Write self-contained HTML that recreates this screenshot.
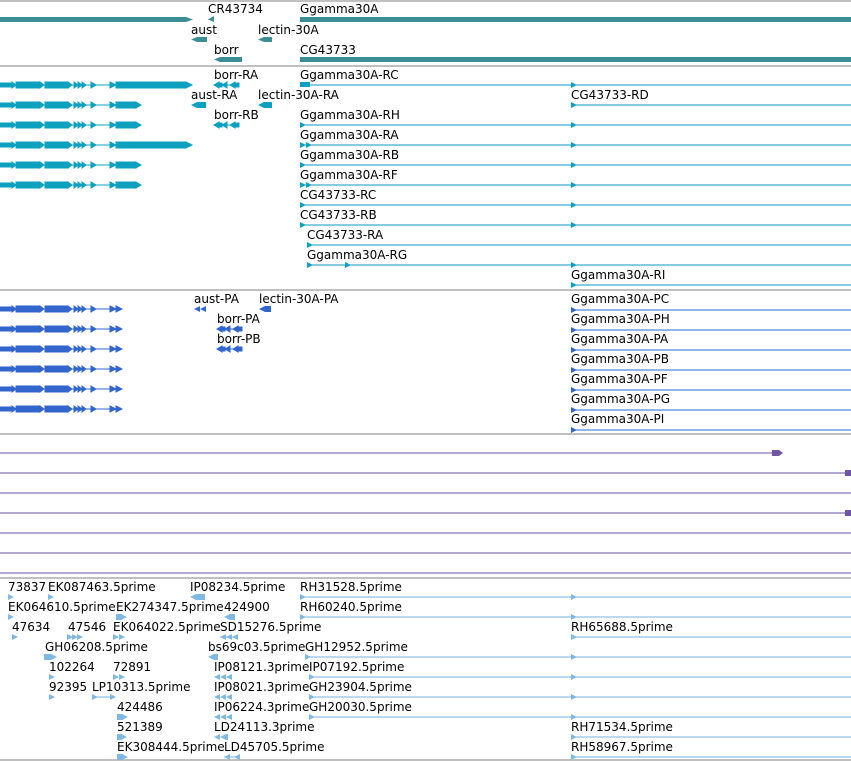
<!DOCTYPE html>
<html><head><meta charset="utf-8"><style>
html,body{margin:0;padding:0;background:#fff;}
svg{display:block;}
text{font-family:"DejaVu Sans","Liberation Sans",sans-serif;font-size:12px;fill:#000;}
line{shape-rendering:crispEdges;}
</style></head><body>
<svg width="851" height="762" viewBox="0 0 851 762" xmlns="http://www.w3.org/2000/svg">
<defs>
<g id="tA">
<line x1="0" y1="0" x2="190" y2="0" stroke-width="1"/>
<rect x="0" y="-2" width="12" height="4"/><polygon points="12,-3 16,0 12,3"/>
<rect x="16" y="-3" width="24" height="6"/><polygon points="40,-3 44,0 40,3"/>
<rect x="45" y="-3" width="23" height="6"/><polygon points="68,-3 72,0 68,3"/>
<polygon points="74,-3 78,0 74,3"/><polygon points="78,-3 82,0 78,3"/><polygon points="82,-3 86,0 82,3"/>
<polygon points="91,-3 96,0 91,3"/><polygon points="110,-3 116,0 110,3"/>
<rect x="116" y="-3" width="70" height="6"/><polygon points="186,-3 192,0 186,3"/>
</g>
<g id="tB">
<line x1="0" y1="0" x2="138" y2="0" stroke-width="1"/>
<rect x="0" y="-2" width="12" height="4"/><polygon points="12,-3 16,0 12,3"/>
<rect x="16" y="-3" width="24" height="6"/><polygon points="40,-3 44,0 40,3"/>
<rect x="45" y="-3" width="23" height="6"/><polygon points="68,-3 72,0 68,3"/>
<polygon points="74,-3 78,0 74,3"/><polygon points="78,-3 82,0 78,3"/><polygon points="82,-3 86,0 82,3"/>
<polygon points="91,-3 96,0 91,3"/><polygon points="110,-3 116,0 110,3"/>
<rect x="116" y="-3" width="20" height="6"/><polygon points="136,-3 141,0 136,3"/>
</g>
<g id="tC">
<line x1="0" y1="0" x2="120" y2="0" stroke-width="1"/>
<rect x="0" y="-2" width="12" height="4"/><polygon points="12,-3 16,0 12,3"/>
<rect x="16" y="-3" width="24" height="6"/><polygon points="40,-3 44,0 40,3"/>
<rect x="45" y="-3" width="23" height="6"/><polygon points="68,-3 72,0 68,3"/>
<polygon points="74,-3 78,0 74,3"/><polygon points="78,-3 82,0 78,3"/><polygon points="82,-3 86,0 82,3"/>
<polygon points="91,-3 96,0 91,3"/><polygon points="110,-3 116,0 110,3"/><polygon points="116,-3 122,0 116,3"/>
</g>
<g id="ra"><polygon points="0,-3 6,0 0,3"/></g>
<g id="la"><polygon points="6,-3 0,0 6,3"/></g>
<g id="rev3"><line x1="0" y1="0" x2="24" y2="0" stroke-width="1"/><polygon points="5,-3 0,0 5,3"/><rect x="5" y="-2" width="3" height="4"/><polygon points="13,-3 8,0 13,3"/><polygon points="21,-3 16,0 21,3"/><rect x="21" y="-2" width="4" height="4"/></g>
</defs>

<g stroke="#c0c0c0" stroke-width="2">
<line x1="0" y1="1" x2="851" y2="1"/><line x1="0" y1="66" x2="851" y2="66"/>
<line x1="0" y1="290" x2="851" y2="290"/><line x1="0" y1="434" x2="851" y2="434"/>
<line x1="0" y1="578" x2="851" y2="578"/><line x1="0" y1="760" x2="851" y2="760"/>
</g>

<g fill="#3d8e94">
<rect x="0" y="17" width="186" height="5"/><polygon points="186,17 193,19.5 186,22"/>
<polygon points="214,16 208,19.5 214,22"/>
<rect x="300" y="17" width="551" height="5"/>
<polygon points="197,37 191,39.5 197,42"/><rect x="197" y="37" width="10" height="5"/>
<polygon points="264,37 258,39.5 264,42"/><rect x="264" y="37" width="8" height="5"/>
<polygon points="220,57 214,59.5 220,62"/><rect x="220" y="57" width="22" height="5"/>
<rect x="300" y="57" width="551" height="5"/>
</g>
<text x="208" y="13">CR43734</text><text x="300" y="13">Ggamma30A</text>
<text x="191" y="34">aust</text><text x="258" y="34">lectin-30A</text>
<text x="214" y="54">borr</text><text x="300" y="54">CG43733</text>

<g fill="#0ea0bf" stroke="#0ea0bf">
<use href="#tA" x="0" y="85"/><use href="#tB" x="0" y="105"/><use href="#tB" x="0" y="125"/>
<use href="#tA" x="0" y="145"/><use href="#tB" x="0" y="165"/><use href="#tB" x="0" y="185"/>
<use href="#rev3" x="214" y="85"/><use href="#rev3" x="214" y="125"/>
<polygon points="197,102 191,105 197,108" stroke="none"/><rect x="197" y="102" width="9" height="6" stroke="none"/>
<polygon points="264,102 258,105 264,108" stroke="none"/><rect x="264" y="102" width="8" height="6" stroke="none"/>
</g>
<g stroke="#0e98b8" stroke-width="1">
<line x1="300" y1="85" x2="851" y2="85"/><line x1="571" y1="105" x2="851" y2="105"/>
<line x1="300" y1="125" x2="851" y2="125"/><line x1="300" y1="145" x2="851" y2="145"/>
<line x1="300" y1="165" x2="851" y2="165"/><line x1="300" y1="185" x2="851" y2="185"/>
<line x1="300" y1="205" x2="851" y2="205"/><line x1="300" y1="225" x2="851" y2="225"/>
<line x1="307" y1="245" x2="851" y2="245"/><line x1="307" y1="265" x2="851" y2="265"/>
<line x1="571" y1="285" x2="851" y2="285"/>
</g>
<g fill="#0ea0bf">
<rect x="300" y="82" width="10" height="5"/><use href="#ra" x="571" y="85"/><use href="#ra" x="571" y="105"/>
<use href="#ra" x="300" y="125"/><use href="#ra" x="571" y="125"/>
<use href="#ra" x="300" y="145"/><use href="#ra" x="306" y="145"/><use href="#ra" x="571" y="145"/>
<use href="#ra" x="300" y="165"/><use href="#ra" x="571" y="165"/>
<use href="#ra" x="300" y="185"/><use href="#ra" x="306" y="185"/><use href="#ra" x="571" y="185"/>
<use href="#ra" x="300" y="205"/><use href="#ra" x="571" y="205"/>
<use href="#ra" x="300" y="225"/><use href="#ra" x="571" y="225"/>
<use href="#ra" x="307" y="245"/>
<use href="#ra" x="307" y="265"/><use href="#ra" x="345" y="265"/><use href="#ra" x="571" y="265"/>
<use href="#ra" x="571" y="285"/>
</g>
<text x="214" y="79">borr-RA</text><text x="300" y="79">Ggamma30A-RC</text>
<text x="191" y="99">aust-RA</text><text x="258" y="99">lectin-30A-RA</text><text x="571" y="99">CG43733-RD</text>
<text x="214" y="119">borr-RB</text><text x="300" y="119">Ggamma30A-RH</text>
<text x="300" y="139">Ggamma30A-RA</text><text x="300" y="159">Ggamma30A-RB</text>
<text x="300" y="179">Ggamma30A-RF</text><text x="300" y="199">CG43733-RC</text>
<text x="300" y="219">CG43733-RB</text><text x="307" y="239">CG43733-RA</text>
<text x="307" y="259">Ggamma30A-RG</text><text x="571" y="279">Ggamma30A-RI</text>

<g fill="#3366cc" stroke="#3366cc">
<use href="#tC" x="0" y="309"/><use href="#tC" x="0" y="329"/><use href="#tC" x="0" y="349"/>
<use href="#tC" x="0" y="369"/><use href="#tC" x="0" y="389"/><use href="#tC" x="0" y="409"/>
<use href="#rev3" x="217" y="329"/><use href="#rev3" x="217" y="349"/>
<polygon points="200,306 194,309 200,312" stroke="none"/><polygon points="206,306 200,309 206,312" stroke="none"/>
<polygon points="265,306 259,309 265,312" stroke="none"/><rect x="265" y="306" width="6" height="6" stroke="none"/>
</g>
<g stroke="#3366cc" stroke-width="1">
<line x1="571" y1="310" x2="851" y2="310"/><line x1="571" y1="330" x2="851" y2="330"/>
<line x1="571" y1="350" x2="851" y2="350"/><line x1="571" y1="370" x2="851" y2="370"/>
<line x1="571" y1="390" x2="851" y2="390"/><line x1="571" y1="410" x2="851" y2="410"/>
<line x1="571" y1="430" x2="851" y2="430"/>
</g>
<g fill="#3366cc">
<use href="#ra" x="571" y="310"/><use href="#ra" x="571" y="330"/><use href="#ra" x="571" y="350"/>
<use href="#ra" x="571" y="370"/><use href="#ra" x="571" y="390"/><use href="#ra" x="571" y="410"/><use href="#ra" x="571" y="430"/>
</g>
<text x="194" y="303">aust-PA</text><text x="259" y="303">lectin-30A-PA</text><text x="571" y="303">Ggamma30A-PC</text>
<text x="217" y="323">borr-PA</text><text x="571" y="323">Ggamma30A-PH</text>
<text x="217" y="343">borr-PB</text><text x="571" y="343">Ggamma30A-PA</text>
<text x="571" y="363">Ggamma30A-PB</text><text x="571" y="383">Ggamma30A-PF</text>
<text x="571" y="403">Ggamma30A-PG</text><text x="571" y="423">Ggamma30A-PI</text>

<g stroke="#6a50a0" stroke-width="1">
<line x1="0" y1="453" x2="780" y2="453"/><line x1="0" y1="473" x2="851" y2="473"/>
<line x1="0" y1="493" x2="851" y2="493"/><line x1="0" y1="513" x2="851" y2="513"/>
<line x1="0" y1="533" x2="851" y2="533"/><line x1="0" y1="553" x2="851" y2="553"/>
<line x1="0" y1="573" x2="851" y2="573"/>
</g>
<g fill="#7055a5">
<rect x="772" y="450" width="7" height="6"/><polygon points="779,450 783,453 779,456"/>
<rect x="845" y="470" width="6" height="6"/><rect x="845" y="510" width="6" height="6"/>
</g>

<g stroke="#74b0dc" stroke-width="1">
<line x1="300" y1="597" x2="851" y2="597"/><line x1="300" y1="617" x2="851" y2="617"/>
<line x1="571" y1="637" x2="851" y2="637"/><line x1="305" y1="657" x2="851" y2="657"/>
<line x1="309" y1="677" x2="851" y2="677"/><line x1="309" y1="697" x2="851" y2="697"/>
<line x1="309" y1="717" x2="851" y2="717"/><line x1="571" y1="737" x2="851" y2="737"/>
<line x1="571" y1="757" x2="851" y2="757"/>
<line x1="92" y1="697" x2="114" y2="697"/><line x1="220" y1="637" x2="237" y2="637"/>
<line x1="224" y1="757" x2="240" y2="757"/>
</g>
<g fill="#7fb8e0">
<use href="#ra" x="8" y="597"/><use href="#ra" x="48" y="597"/>
<polygon points="196,594 190,597 196,600"/><rect x="196" y="594" width="9" height="6"/>
<use href="#ra" x="300" y="597"/><use href="#ra" x="571" y="597"/>
<use href="#ra" x="8" y="617"/><rect x="116" y="614" width="6" height="6"/><use href="#ra" x="121" y="617"/>
<polygon points="230,614 224,617 230,620"/><rect x="230" y="614" width="5" height="6"/>
<use href="#ra" x="300" y="617"/><use href="#ra" x="571" y="617"/>
<use href="#ra" x="12" y="637"/><use href="#ra" x="67" y="637"/><use href="#ra" x="72" y="637"/><use href="#ra" x="77" y="637"/>
<use href="#ra" x="113" y="637"/><use href="#ra" x="119" y="637"/>
<use href="#la" x="220" y="637"/><use href="#la" x="226" y="637"/><use href="#la" x="232" y="637"/>
<use href="#ra" x="571" y="637"/>
<rect x="44" y="654" width="7" height="6"/><use href="#ra" x="51" y="657"/>
<polygon points="214,654 208,657 214,660"/><rect x="214" y="654" width="4" height="6"/>
<use href="#ra" x="305" y="657"/><use href="#ra" x="571" y="657"/>
<use href="#ra" x="49" y="677"/><use href="#ra" x="113" y="677"/><use href="#ra" x="119" y="677"/>
<use href="#la" x="214" y="677"/><use href="#la" x="220" y="677"/><use href="#la" x="226" y="677"/>
<use href="#ra" x="309" y="677"/><use href="#ra" x="571" y="677"/>
<use href="#ra" x="49" y="697"/><use href="#ra" x="92" y="697"/><use href="#ra" x="110" y="697"/>
<use href="#la" x="214" y="697"/><use href="#la" x="220" y="697"/><use href="#la" x="226" y="697"/>
<use href="#ra" x="309" y="697"/><use href="#ra" x="571" y="697"/>
<rect x="117" y="714" width="6" height="6"/><use href="#ra" x="122" y="717"/>
<use href="#la" x="214" y="717"/><use href="#la" x="220" y="717"/><use href="#la" x="226" y="717"/>
<use href="#ra" x="309" y="717"/><use href="#ra" x="571" y="717"/>
<rect x="117" y="734" width="5" height="6"/><use href="#ra" x="121" y="737"/>
<use href="#la" x="214" y="737"/><use href="#la" x="220" y="737"/><rect x="226" y="734" width="2" height="6"/>
<use href="#ra" x="571" y="737"/>
<rect x="117" y="754" width="6" height="6"/><use href="#ra" x="122" y="757"/>
<use href="#la" x="224" y="757"/><use href="#la" x="234" y="757"/>
<use href="#ra" x="571" y="757"/>
</g>
<text x="8" y="591">73837</text><text x="48" y="591">EK087463.5prime</text><text x="190" y="591">IP08234.5prime</text><text x="300" y="591">RH31528.5prime</text>
<text x="8" y="611">EK064610.5prime</text><text x="116" y="611">EK274347.5prime</text><text x="224" y="611">424900</text><text x="300" y="611">RH60240.5prime</text>
<text x="12" y="631">47634</text><text x="68" y="631">47546</text><text x="113" y="631">EK064022.5prime</text><text x="220" y="631">SD15276.5prime</text><text x="571" y="631">RH65688.5prime</text>
<text x="45" y="651">GH06208.5prime</text><text x="208" y="651">bs69c03.5prime</text><text x="305" y="651">GH12952.5prime</text>
<text x="49" y="671">102264</text><text x="113" y="671">72891</text><text x="214" y="671">IP08121.3prime</text><text x="309" y="671">IP07192.5prime</text>
<text x="49" y="691">92395</text><text x="92" y="691">LP10313.5prime</text><text x="214" y="691">IP08021.3prime</text><text x="309" y="691">GH23904.5prime</text>
<text x="117" y="711">424486</text><text x="214" y="711">IP06224.3prime</text><text x="309" y="711">GH20030.5prime</text>
<text x="117" y="731">521389</text><text x="214" y="731">LD24113.3prime</text><text x="571" y="731">RH71534.5prime</text>
<text x="117" y="751">EK308444.5prime</text><text x="224" y="751">LD45705.5prime</text><text x="571" y="751">RH58967.5prime</text>
</svg>
</body></html>
